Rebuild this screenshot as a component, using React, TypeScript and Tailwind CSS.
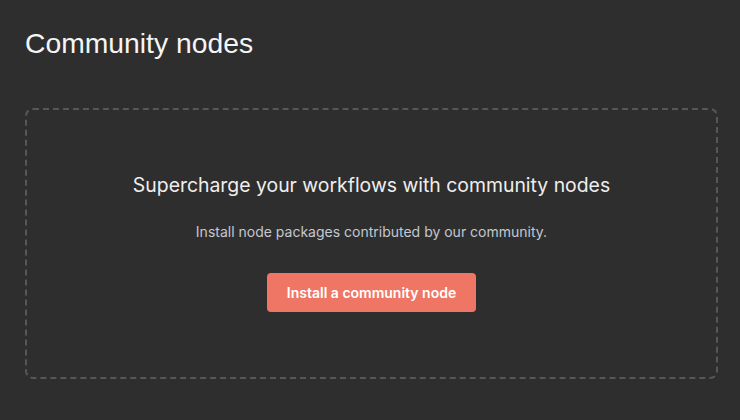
export default function App() {
  return (
    <div className="w-[740px] h-[420px] bg-[#2e2e2e] px-[25px] pt-[26px] overflow-hidden" style={{ fontFamily: 'Inter, "Noto Sans", sans-serif' }}>
      <h1 className="text-[28.3px] leading-[34px] text-[#f5f5f5] font-normal" style={{ fontFamily: '"Liberation Sans", Arial, sans-serif' }}>
        Community nodes
      </h1>
      <div className="mt-[48px] w-[693px] h-[271px] border-2 border-dashed border-[#575757] rounded-[8px] flex flex-col items-center pt-[62px]">
        <div className="text-[19.4px] leading-[26px] text-[#eeeeee]">Supercharge your workflows with community nodes</div>
        <div className="mt-[24px] text-[14px] leading-[20px] text-[#c4c8d0]">Install node packages contributed by our community.</div>
        <button className="mt-[31px] w-[209px] h-[39px] rounded-[4px] bg-[#ef7664] text-white text-[14px] font-semibold">
          Install a community node
        </button>
      </div>
    </div>
  );
}
